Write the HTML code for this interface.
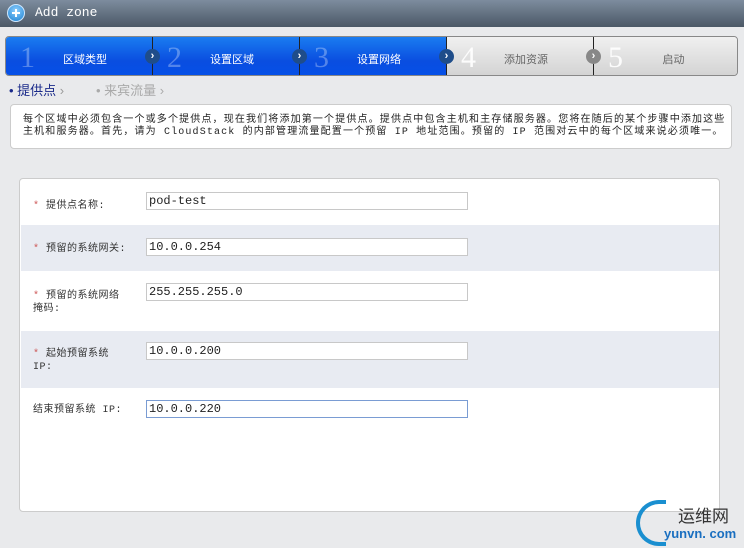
<!DOCTYPE html>
<html><head><meta charset="utf-8"><style>
*{margin:0;padding:0;box-sizing:border-box}
body{width:744px;height:548px;overflow:hidden;background:#e9eaec;font-family:"Liberation Sans","Noto Sans CJK SC",sans-serif;position:relative}
.hdr{position:absolute;left:0;top:0;width:744px;height:27px;background:linear-gradient(#7d8c9e,#4b5866);}
.hdr .t{position:absolute;left:35px;top:5px;color:#fff;font-family:"Liberation Mono",monospace;font-size:13px}
.hdr .ic{position:absolute;left:7px;top:4px;width:18px;height:18px;border-radius:50%;background:radial-gradient(circle at 50% 35%,#8fd0ff,#1a7fd0);border:1px solid #cfe8ff}
.hdr .ic:before{content:"";position:absolute;left:4px;top:7px;width:8px;height:2px;background:#fff}
.hdr .ic:after{content:"";position:absolute;left:7px;top:4px;width:2px;height:8px;background:#fff}
.steps{position:absolute;left:5px;top:36px;width:733px;height:40px;border-radius:4px;overflow:hidden;border:1px solid #888}
.seg{position:absolute;top:0;height:40px;border-right:1px solid #222}
.blue{background:linear-gradient(#1a7cf0,#0a4ee0 60%,#0550e8)}
.grey{background:linear-gradient(#f0f0f0,#d2d2d2)}
.num{position:absolute;left:14px;top:4px;font:30px "Liberation Serif",serif;color:rgba(255,255,255,.3)}
.grey .num{color:rgba(255,255,255,.9)}
.lab{position:absolute;left:12px;right:0;top:14px;text-align:center;font-size:11px;color:#fff}
.grey .lab{color:#666}
.arr{position:absolute;top:12px;width:15px;height:15px;border-radius:50%;background:#1f4d8a;color:#fff;font-size:11px;line-height:14px;text-align:center;font-weight:bold;z-index:2}
.sub{position:absolute;top:80px;font-size:13px}
.desc{position:absolute;left:10px;top:104px;width:722px;height:45px;background:#fff;border:1px solid #ccc;border-radius:4px;font-family:"Liberation Mono","Noto Sans CJK SC",monospace;font-size:10px;line-height:12px;padding:10px 0 0 12px;color:#222;white-space:nowrap;letter-spacing:1.15px}
.panel{position:absolute;left:19px;top:178px;width:701px;height:334px;background:#fff;border:1px solid #ccc;border-radius:4px}
.row{position:absolute;left:1px;width:698px}
.row .l{position:absolute;left:12px;font-family:"Liberation Mono","Noto Sans CJK SC",monospace;font-size:10px;color:#333;line-height:13px;width:110px;letter-spacing:.5px}
.row .l b{color:#c55;font-weight:normal}
.row input{position:absolute;left:125px;width:322px;height:18px;border:1px solid #c8c8c8;font:12px "Liberation Mono",monospace;padding-left:2px;color:#222;background:#fff}
</style></head><body>
<div class="hdr"><div class="ic"></div><div class="t">Add zone</div></div>
<div class="steps">
<div class="seg blue" style="left:0;width:147px"><span class="num">1</span><div class="lab">区域类型</div></div>
<div class="seg blue" style="left:147px;width:147px"><span class="num">2</span><div class="lab">设置区域</div></div>
<div class="seg blue" style="left:294px;width:147px"><span class="num">3</span><div class="lab">设置网络</div></div>
<div class="seg grey" style="left:441px;width:147px"><span class="num">4</span><div class="lab">添加资源</div></div>
<div class="seg grey" style="left:588px;width:147px;border:none"><span class="num">5</span><div class="lab">启动</div></div>
<div class="arr" style="left:139px">›</div>
<div class="arr" style="left:286px">›</div>
<div class="arr" style="left:433px">›</div>
<div class="arr" style="left:580px;background:#888">›</div>
</div>
<div class="sub" style="left:9px;color:#1a2a8a">• 提供点 <span style="color:#999">›</span></div>
<div class="sub" style="left:96px;color:#aaa">• 来宾流量 ›</div>
<div class="desc">每个区域中必须包含一个或多个提供点，现在我们将添加第一个提供点。提供点中包含主机和主存储服务器。您将在随后的某个步骤中添加这些<br>主机和服务器。首先，请为 CloudStack 的内部管理流量配置一个预留 IP 地址范围。预留的 IP 范围对云中的每个区域来说必须唯一。</div>
<div class="panel">
<div class="row" style="top:6px;height:40px"><div class="l" style="top:15px"><b>*</b> 提供点名称:</div><input style="top:7px" value="pod-test"></div>
<div class="row" style="top:46px;height:46px;background:#e8ebf2"><div class="l" style="top:18px"><b>*</b> 预留的系统网关:</div><input style="top:13px" value="10.0.0.254"></div>
<div class="row" style="top:92px;height:60px"><div class="l" style="top:19px"><b>*</b> 预留的系统网络<br>掩码:</div><input style="top:12px" value="255.255.255.0"></div>
<div class="row" style="top:152px;height:57px;background:#e8ebf2"><div class="l" style="top:17px"><b>*</b> 起始预留系统<br>IP:</div><input style="top:11px" value="10.0.0.200"></div>
<div class="row" style="top:209px;height:43px"><div class="l" style="top:16px">结束预留系统 IP:</div><input style="top:12px;border-color:#7a9cd3" value="10.0.0.220"></div>
</div>
<div style="position:absolute;left:636px;top:500px;width:30px;height:46px;border:4px solid #1a8fd0;border-right:none;border-radius:30px 0 0 30px"></div>
<div style="position:absolute;left:678px;top:502px;font-size:17px;color:#333">运维网</div>
<div style="position:absolute;left:664px;top:526px;font-size:13px;font-weight:bold;color:#1a6fc0">yunvn. com</div>
</body></html>
